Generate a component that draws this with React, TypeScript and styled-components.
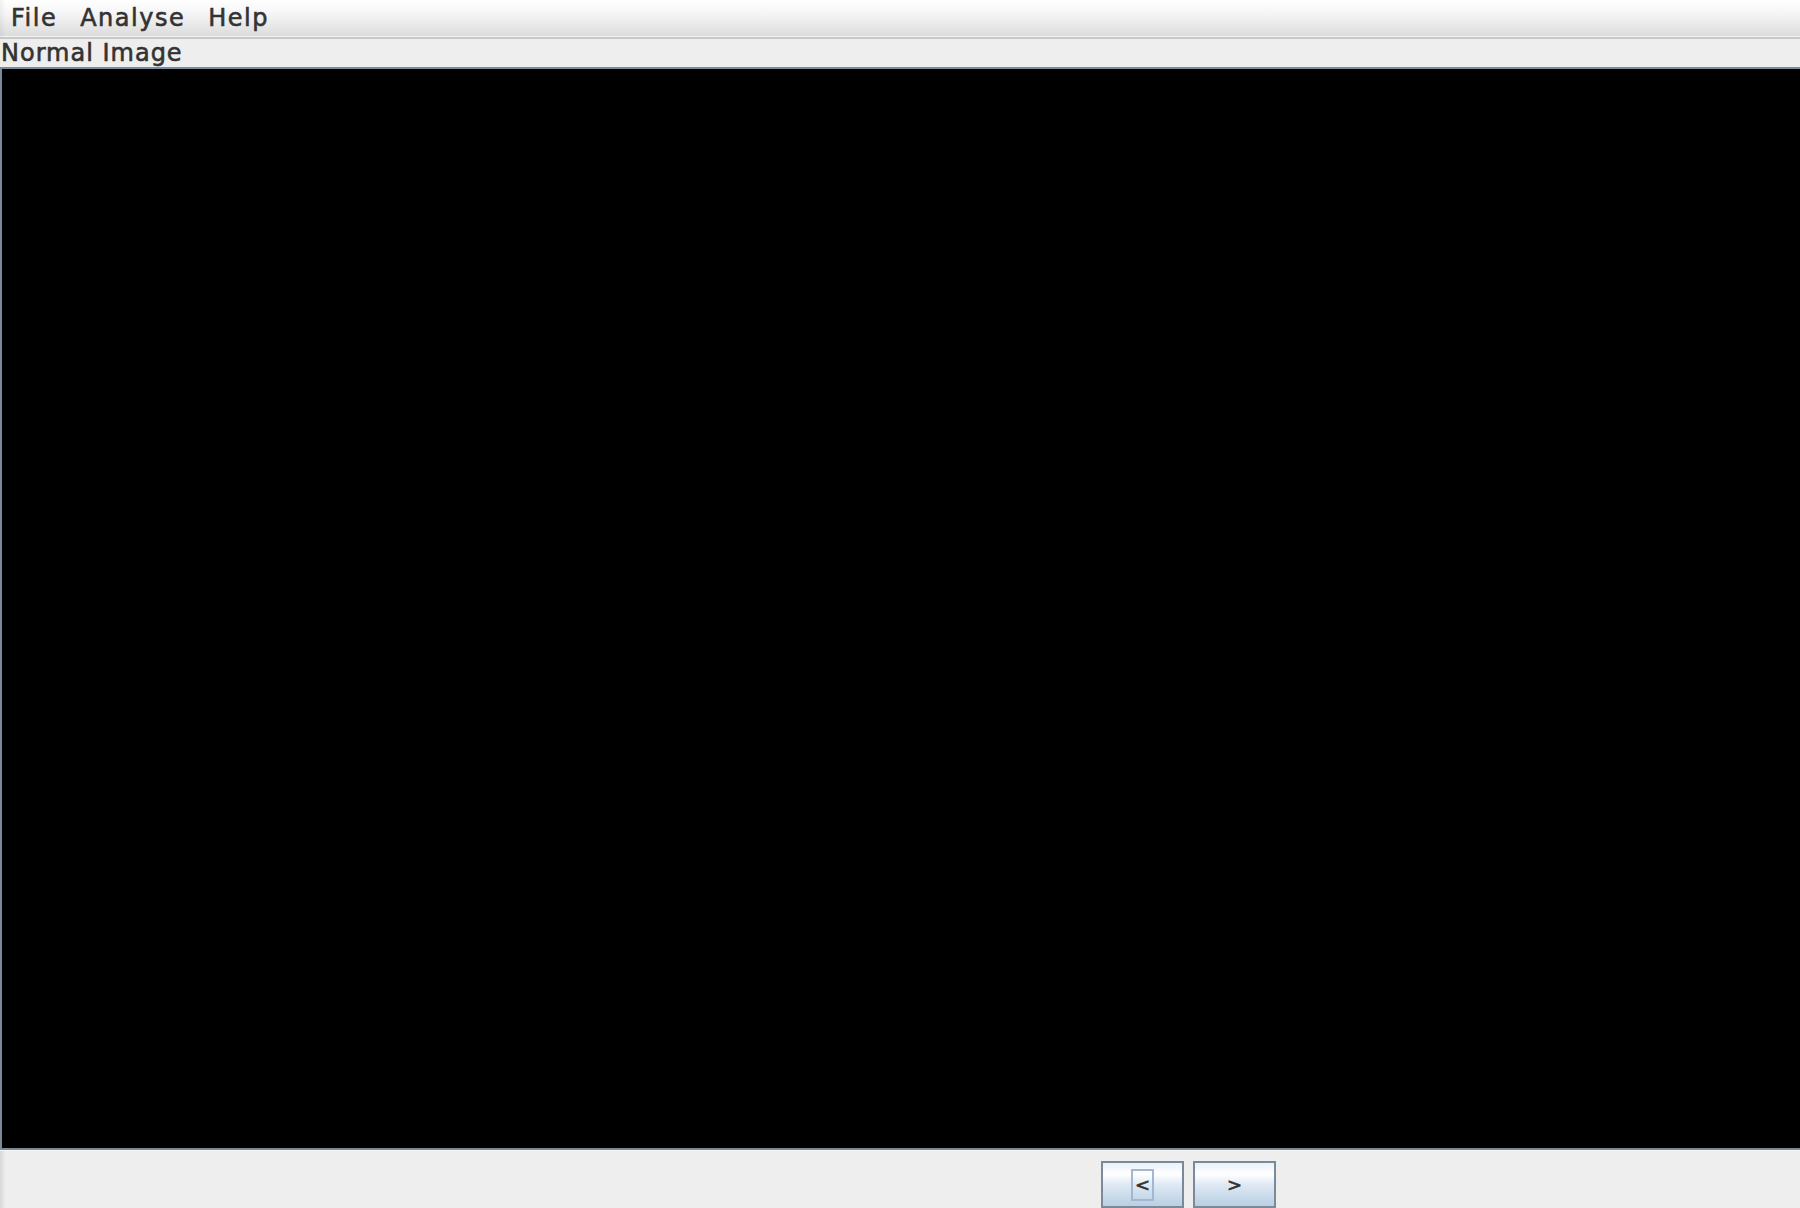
import React from 'react';
import styled, { createGlobalStyle } from 'styled-components';

const GlobalStyle = createGlobalStyle`
	html, body {
		margin: 0;
		padding: 0;
		background: #eeeeee;
	}
	#root {
		height: 1208px;
	}
`;

const Frame = styled.div`
	display: flex;
	flex-direction: column;
	width: 1800px;
	height: 1208px;
	overflow: hidden;
	background: #eeeeee;
	color: #333333;
	font-family: 'DejaVu Sans', sans-serif;
	font-size: 24px;
	-webkit-text-stroke: 0.6px #333333;
`;

const MenuBar = styled.div`
	display: flex;
	flex: 0 0 39px;
	align-items: center;
	gap: 23px;
	padding: 0 0 2px 11px;
	box-sizing: border-box;
	background: linear-gradient(to right, rgba(0, 0, 0, 0.05), rgba(0, 0, 0, 0) 6px),
		linear-gradient(#ffffff 0%, #f6f6f6 35%, #dcdcdc 97%, #f4f4f4 97%);
	border-bottom: 2px solid #c8c8c8;
`;

const MenuItem = styled.span`
	line-height: 26px;
	letter-spacing: 1.5px;
`;

const ViewTitle = styled.div`
	flex: 0 0 28px;
	padding: 1px 0 0 1px;
	box-sizing: border-box;
	line-height: 27px;
	letter-spacing: 1px;
	white-space: nowrap;
`;

const ImagePane = styled.div`
	flex: 0 0 1083px;
	box-sizing: border-box;
	background: #000000;
	border: solid #7a8a99;
	border-width: 2px 0 2px 2px;
`;

const ButtonRow = styled.div`
	display: flex;
	flex: 1;
	gap: 9px;
	padding: 10px 0 0 1101px;
	box-sizing: border-box;
	border-top: 1px solid #f6f6f6;
	background: linear-gradient(to right, #d8d8d8, #eeeeee 6px);
`;

const NavButton = styled.button`
	display: flex;
	flex: none;
	align-items: center;
	justify-content: center;
	width: 83px;
	height: 47px;
	padding: 0;
	box-sizing: border-box;
	border: 2px solid #7a8a99;
	background: linear-gradient(#eaf1f9 0%, #ffffff 26%, #dde8f3 52%, #b8cfe5 100%);
	color: inherit;
	font: inherit;
	font-size: 18px;
`;

const FocusBox = styled.span<{ $focused?: boolean }>`
	display: flex;
	align-items: center;
	justify-content: center;
	width: 23px;
	height: 32px;
	box-sizing: border-box;
	border: 2px solid ${(p) => (p.$focused ? '#a3b8cc' : 'transparent')};
`;

const App: React.FC = () => {
	return (
		<Frame>
			<GlobalStyle />
			<MenuBar>
				<MenuItem>File</MenuItem>
				<MenuItem>Analyse</MenuItem>
				<MenuItem>Help</MenuItem>
			</MenuBar>
			<ViewTitle>Normal Image</ViewTitle>
			<ImagePane />
			<ButtonRow>
				<NavButton type='button'>
					<FocusBox $focused>&lt;</FocusBox>
				</NavButton>
				<NavButton type='button'>
					<FocusBox>&gt;</FocusBox>
				</NavButton>
			</ButtonRow>
		</Frame>
	);
};

export default App;
